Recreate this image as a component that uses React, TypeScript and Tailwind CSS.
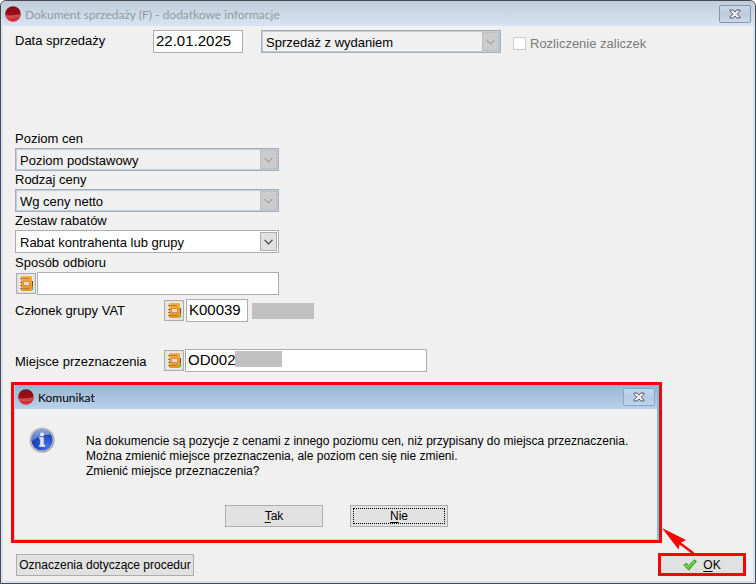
import React from "react";

const FONT = "font-['Liberation_Sans',Arial,sans-serif]";
const TITLE_FONT = "font-['Lato','Open_Sans',sans-serif]";

function AppLogo() {
  return (
    <svg className="size-4 shrink-0" viewBox="0 0 16 16" aria-hidden="true">
      <defs>
        <linearGradient id="logo" x1="0" y1="0" x2="0" y2="1">
          <stop offset="0" stopColor="#860c12" />
          <stop offset="0.55" stopColor="#9c1016" />
          <stop offset="0.62" stopColor="#c22a30" />
          <stop offset="1" stopColor="#d8323a" />
        </linearGradient>
        <clipPath id="logoClip">
          <circle cx="8" cy="8" r="7.8" />
        </clipPath>
      </defs>
      <circle cx="8" cy="8" r="7.8" fill="url(#logo)" />
      <g clipPath="url(#logoClip)" fill="none">
        <path d="M0 9.8C5 10.8 11 10 16 8.4" stroke="#d9777a" strokeWidth="0.8" />
        <path d="M0 11.8C5 12 10 11.6 16 10.4" stroke="#dd6a6e" strokeWidth="0.7" />
      </g>
    </svg>
  );
}

function CloseButton({ active }: { active?: boolean }) {
  return (
    <button
      type="button"
      aria-label="Zamknij"
      className={
        "flex h-[18px] w-8 shrink-0 items-center justify-center rounded-[2px] border bg-linear-to-b " +
        (active
          ? "border-[#8ba5c8] from-[#c3d8ef] via-[#b4cbe5] to-[#bdd4ec]"
          : "border-[#8493ae] from-[#c9d6e6] via-[#bccbdd] to-[#ccd9e8]")
      }
    >
      <svg className="h-[10px] w-3" viewBox="0 0 12 10" aria-hidden="true">
        <path
          d="M1 1H4.2L6 3L7.8 1H11V2.2L8.2 5L11 7.8V9H7.8L6 7L4.2 9H1V7.8L3.8 5L1 2.2Z"
          fill="#eeeef2"
          stroke="#53566b"
          strokeWidth="1"
          strokeLinejoin="round"
        />
      </svg>
    </button>
  );
}

function BookButton({ label }: { label: string }) {
  return (
    <button
      type="button"
      aria-label={label}
      className="flex h-[21px] w-5 shrink-0 items-center justify-center border border-[#adadad] bg-[#e1e1e1]"
    >
      <svg className="h-[17px] w-4 shrink-0" viewBox="0 0 16 17" aria-hidden="true">
        <defs>
          <linearGradient id="book" x1="0" y1="0" x2="0" y2="1">
            <stop offset="0" stopColor="#eeb03c" />
            <stop offset="1" stopColor="#e09a1c" />
          </linearGradient>
        </defs>
        <rect x="1" y="0" width="14" height="17" rx="1" fill="#f0ece4" />
        <rect x="14" y="6" width="1" height="3" fill="#7d4038" />
        <rect x="14" y="9" width="1" height="2" fill="#d02c28" />
        <rect x="14" y="11" width="1" height="4" fill="#2ac05a" />
        <rect x="3" y="1" width="11" height="15" rx="1" fill="url(#book)" />
        <path d="M5 3.5H11M5 13.5H11" stroke="#bd7440" strokeWidth="1" />
        <rect x="5" y="6" width="7" height="5" fill="#d98a5a" />
        <rect x="6" y="7" width="5" height="3" fill="#f6d9cc" />
        <path d="M2 3.5H4M2 7.5H4M2 10.5H4M2 13.5H4" stroke="#a06a58" strokeWidth="1" />
      </svg>
    </button>
  );
}

function Combo({
  id,
  value,
  label,
  disabled,
  className,
}: {
  id: string;
  value: string;
  label?: string;
  disabled?: boolean;
  className: string;
}) {
  return (
    <div className={"relative h-[23px] " + className}>
      <select
        id={id}
        aria-label={label}
        disabled={disabled}
        className={
          "block h-full w-full appearance-none border border-[#abadb3] pl-1 pr-5 pt-0.5 text-[13px] leading-5 text-black opacity-100 " +
          (disabled ? "bg-[#f0f0f0] shadow-[inset_0_0_0_1px_#b5cfe7]" : "bg-white")
        }
      >
        <option>{value}</option>
      </select>
      <span
        className={
          "pointer-events-none absolute bottom-0.5 right-0.5 top-0.5 flex w-[17px] items-center justify-center border " +
          (disabled
            ? "border-[#bfbfbf] bg-[#cccccc] text-[#a0a0a0]"
            : "border-[#adadad] bg-[#e1e1e1] text-[#404040]")
        }
      >
        <svg className="h-[6px] w-[9px]" viewBox="0 0 9 6" aria-hidden="true">
          <path d="M0.5 0.8L4.5 4.8L8.5 0.8" fill="none" stroke="currentColor" strokeWidth="1.2" />
        </svg>
      </span>
    </div>
  );
}

const INPUT = "block h-[23px] border border-[#abadb3] bg-white px-0.5 pb-0.5 text-[15px] leading-5 text-black outline-none";
const BUTTON = "flex h-[22px] items-center justify-center border border-[#adadad] bg-[#e1e1e1] text-xs";

function InfoIcon() {
  return (
    <svg className="size-[26px] shrink-0" viewBox="0 0 26 26" aria-hidden="true">
      <defs>
        <linearGradient id="ring" x1="0" y1="0" x2="1" y2="1">
          <stop offset="0" stopColor="#c4c4c4" />
          <stop offset="1" stopColor="#9a9a9a" />
        </linearGradient>
        <linearGradient id="infoTop" x1="0" y1="0" x2="0" y2="1">
          <stop offset="0" stopColor="#8ba6dc" />
          <stop offset="1" stopColor="#4a72c8" />
        </linearGradient>
        <radialGradient id="infoBase" cx="0.7" cy="0.75" r="0.7">
          <stop offset="0" stopColor="#3f70f0" />
          <stop offset="1" stopColor="#1638a8" />
        </radialGradient>
      </defs>
      <circle cx="13" cy="13" r="12.6" fill="url(#ring)" />
      <circle cx="13" cy="13" r="11.4" fill="#b9bec8" />
      <circle cx="13" cy="13" r="10.5" fill="url(#infoBase)" />
      <path d="M2.5 13A10.5 10.5 0 0 1 22 7.5C15 7.5 8 9.5 2.5 15Z" fill="url(#infoTop)" />
      <circle cx="13" cy="7.5" r="2" fill="#e8ecf4" />
      <path d="M10.5 10.5H14.5V18H16V19.5H10.500V18H11.500V12H10.500Z" fill="#dfe4ee" stroke="#dfe4ee" strokeWidth="0.6" />
    </svg>
  );
}

export default function App() {
  return (
    <main
      className={
        "flex min-h-screen flex-col rounded-t-md border border-[#4a4a4e] bg-[#d7e4f2] text-[13px] leading-[18px] text-black " +
        FONT
      }
    >
      <header className="flex h-[25px] items-center gap-1 rounded-t-md bg-linear-to-b from-[#bfcddb] to-[#d7e4f2] pl-1 pr-1">
        <AppLogo />
        <h1 className={"flex-1 pt-0.5 text-xs text-[#939aa3] " + TITLE_FONT}>
          Dokument sprzedaży (F) - dodatkowe informacje
        </h1>
        <CloseButton />
      </header>

      <div className="mx-0.5 mb-0.5 flex flex-1 flex-col bg-[#f0f0f0] pb-[5px] pl-3 pr-[7px] pt-1">
        <div className="flex">
          <label htmlFor="saleDate" className="w-[138px] pt-0.5">
            Data sprzedaży
          </label>
          <input id="saleDate" defaultValue="22.01.2025" className={"w-[90px] " + INPUT} />
          <Combo
            id="saleKind"
            label="Rodzaj sprzedaży"
            value="Sprzedaż z wydaniem"
            disabled
            className="ml-[18px] w-60"
          />
          <label className="ml-3 flex items-center gap-1 pt-1 text-[#7a7a7a]">
            <input
              type="checkbox"
              disabled
              className="size-[13px] appearance-none border border-[#cccccc] bg-white"
            />
            Rozliczenie zaliczek
          </label>
        </div>

        <div className="mt-[77px] w-[264px]">
          <label htmlFor="priceLevel" className="block">
            Poziom cen
          </label>
          <Combo id="priceLevel" value="Poziom podstawowy" disabled className="w-full" />
          <label htmlFor="priceKind" className="block">
            Rodzaj ceny
          </label>
          <Combo id="priceKind" value="Wg ceny netto" disabled className="w-full" />
          <label htmlFor="discounts" className="block">
            Zestaw rabatów
          </label>
          <Combo id="discounts" value="Rabat kontrahenta lub grupy" className="w-full" />
          <label htmlFor="pickup" className="block pt-px">
            Sposób odbioru
          </label>
          <div className="flex items-center gap-px pl-px">
            <BookButton label="Wybierz sposób odbioru" />
            <input id="pickup" className={"min-w-0 flex-1 " + INPUT} />
          </div>
        </div>

        <div className="mt-1 flex items-center">
          <label htmlFor="vatMember" className="w-[149px]">
            Członek grupy VAT
          </label>
          <BookButton label="Wybierz członka grupy VAT" />
          <input id="vatMember" defaultValue="K00039" className={"ml-0.5 w-[62px] " + INPUT} />
          <span className="ml-1 h-4 w-[62px] bg-[#c0c0c0]" />
        </div>

        <div className="mt-[27px] flex items-center">
          <label htmlFor="destination" className="w-[149px] pt-0.5">
            Miejsce przeznaczenia
          </label>
          <BookButton label="Wybierz miejsce przeznaczenia" />
          <div className="relative ml-px">
            <input id="destination" defaultValue="OD002" className={"w-[242px] " + INPUT} />
            <span className="absolute left-[50px] top-0.5 h-4 w-[47px] bg-[#c0c0c0]" />
          </div>
        </div>

        <section
          role="dialog"
          aria-labelledby="messageTitle"
          className="-ml-1 mr-[84px] mt-[10px] border-[3px] border-[#ff0000]"
        >
          <div className="border-b border-l border-r-2 border-b-[#b9d1ea] border-l-[#b9d1ea] border-r-[#5fc8ee]">
            <header className="flex h-6 items-center gap-1 bg-linear-to-b from-[#99b4d1] to-[#b9d1ea] pl-[3px] pr-0.5">
              <AppLogo />
              <h2 id="messageTitle" className={"flex-1 pt-0.5 text-xs " + TITLE_FONT}>
                Komunikat
              </h2>
              <CloseButton active />
            </header>
            <div className="flex gap-[31px] pl-3.5 pt-[18px]">
              <InfoIcon />
              <p className="pt-[7px] text-xs leading-[15px]">
                Na dokumencie są pozycje z cenami z innego poziomu cen, niż przypisany do miejsca przeznaczenia.
                <br />
                Można zmienić miejsce przeznaczenia, ale poziom cen się nie zmieni.
                <br />
                Zmienić miejsce przeznaczenia?
              </p>
            </div>
            <div className="flex justify-center gap-[27px] pb-3 pl-px pt-[26px]">
              <button type="button" className={"w-[98px] " + BUTTON}>
                <span>
                  <u className="underline-offset-2">T</u>ak
                </span>
              </button>
              <button type="button" className={"w-[98px] p-0.5 " + BUTTON}>
                <span className="flex h-full w-full items-center justify-center border border-dotted border-black">
                  <span>
                    <u className="underline-offset-2">N</u>ie
                  </span>
                </span>
              </button>
            </div>
          </div>
        </section>

        <footer className="mt-[10px] flex items-center justify-between pl-px">
          <button type="button" className={"w-[178px] whitespace-nowrap " + BUTTON}>
            Oznaczenia dotyczące procedur
          </button>
          <div className="relative">
            <svg
              className="pointer-events-none absolute bottom-full left-1 h-[25px] w-8"
              viewBox="0 0 32 25"
              aria-hidden="true"
            >
              <path d="M0 0L24 12L19 14.5L33 25H29L17.5 16.5L16.5 21.5Z" fill="#ff0000" />
            </svg>
            <button
              type="button"
              className="flex h-[23px] w-[88px] items-center justify-center gap-1.5 border-[3px] border-[#ff0000] bg-[#e1e1e1] text-xs"
            >
              <svg className="h-3 w-[14px]" viewBox="0 0 14 12" aria-hidden="true">
                <path
                  d="M0.8 6L3.3 4.2L5.5 6.5L11.5 0.8L13.5 2.2L5.8 11.2Z"
                  fill="#4cc425"
                  stroke="#2f9420"
                  strokeWidth="0.8"
                  strokeLinejoin="round"
                />
                <path d="M2.5 6L5.6 8.2L11.5 2.2" fill="none" stroke="#a5ec8a" strokeWidth="0.8" />
              </svg>
              <span>
                <u className="underline-offset-2">O</u>K
              </span>
            </button>
          </div>
        </footer>
      </div>
    </main>
  );
}
